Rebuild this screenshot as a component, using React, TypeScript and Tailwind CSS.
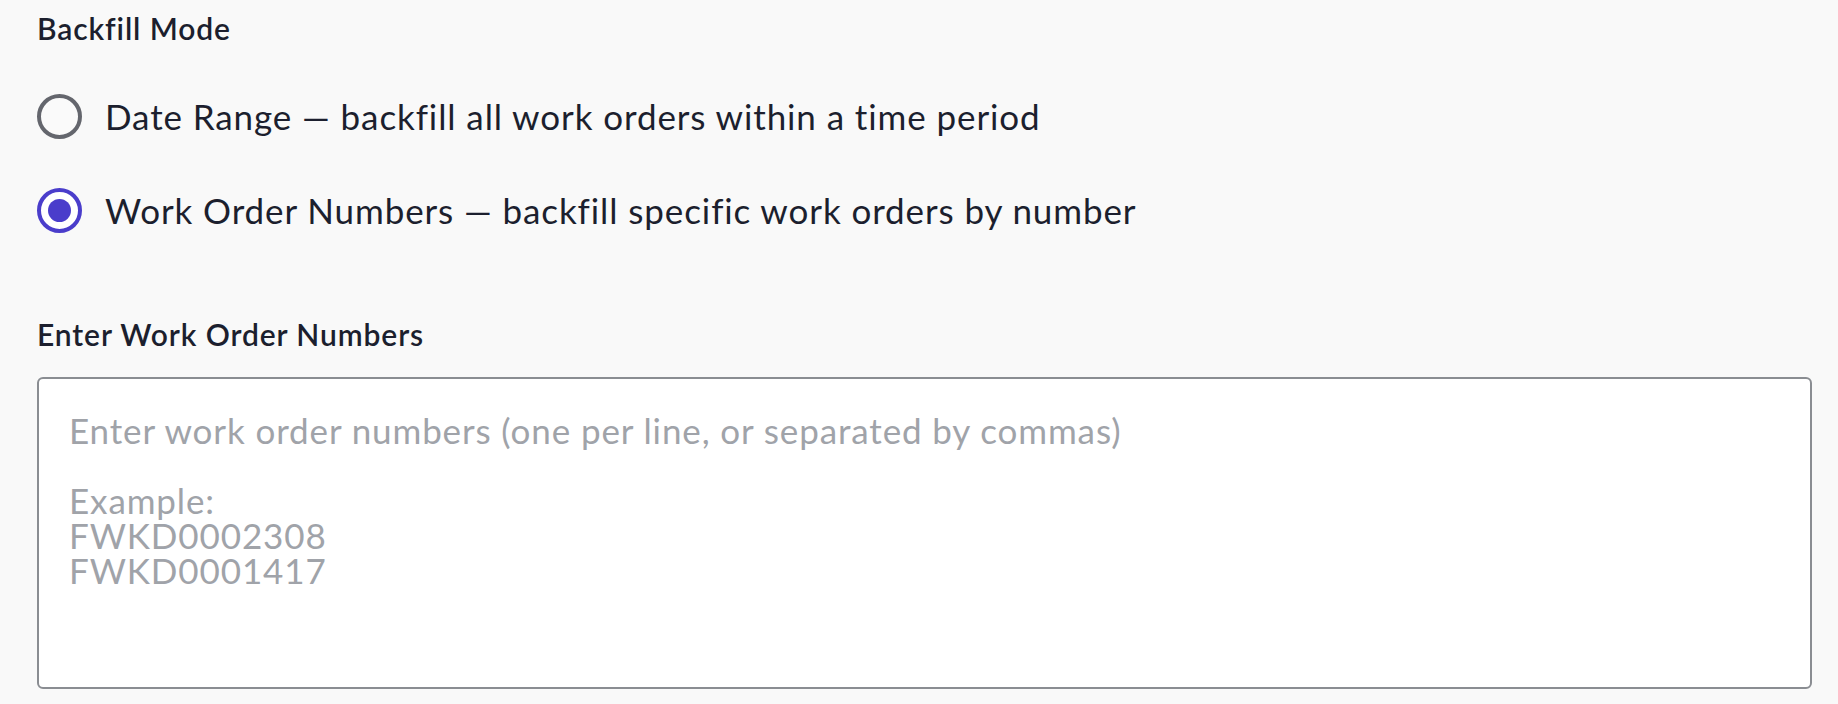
import React from "react";

function Radio({ checked, label }: { checked: boolean; label: string }) {
  return (
    <label className="flex items-center gap-[23px] h-[48px]">
      {checked ? (
        <span className="flex items-center justify-center w-[45px] h-[45px] rounded-full border-[4.5px] border-[#4a3dcb] bg-white">
          <span className="w-[23px] h-[23px] rounded-full bg-[#4a3dcb]" />
        </span>
      ) : (
        <span className="w-[45px] h-[45px] rounded-full border-[4px] border-[#64666d] bg-[#fafafa]" />
      )}
      <span className="text-[35px] leading-[40px] tracking-[0.9px] text-[#1c1f2e]">{label}</span>
    </label>
  );
}

export default function App() {
  return (
    <div
      className="min-h-[704px] bg-[#f9f9f9] pl-[37px] pr-[26px] pt-[8px]"
      style={{ fontFamily: "Lato, 'Noto Sans', sans-serif" }}
    >
      <div className="text-[30px] leading-[40px] tracking-[0.9px] font-semibold text-[#1c1f2e]">Backfill Mode</div>
      <div className="mt-[44px] flex flex-col gap-[46px]">
        <Radio checked={false} label="Date Range — backfill all work orders within a time period" />
        <Radio checked={true} label="Work Order Numbers — backfill specific work orders by number" />
      </div>
      <div className="mt-[80px] text-[30px] leading-[40px] tracking-[0.9px] font-semibold text-[#1c1f2e]">Enter Work Order Numbers</div>
      <textarea
        className="mt-[23px] block w-full h-[312px] resize-none rounded-[6px] border-2 border-[#8a8d92] bg-white pl-[30px] pr-[28px] pt-[34px] pb-[20px] text-[35px] leading-[35px] tracking-[0.88px] text-[#1c1f2e] placeholder:text-[#a0a3a9] outline-none"
        style={{ fontFamily: "Lato, 'Noto Sans', sans-serif" }}
        placeholder={"Enter work order numbers (one per line, or separated by commas)\n\nExample:\nFWKD0002308\nFWKD0001417"}
      />
    </div>
  );
}
